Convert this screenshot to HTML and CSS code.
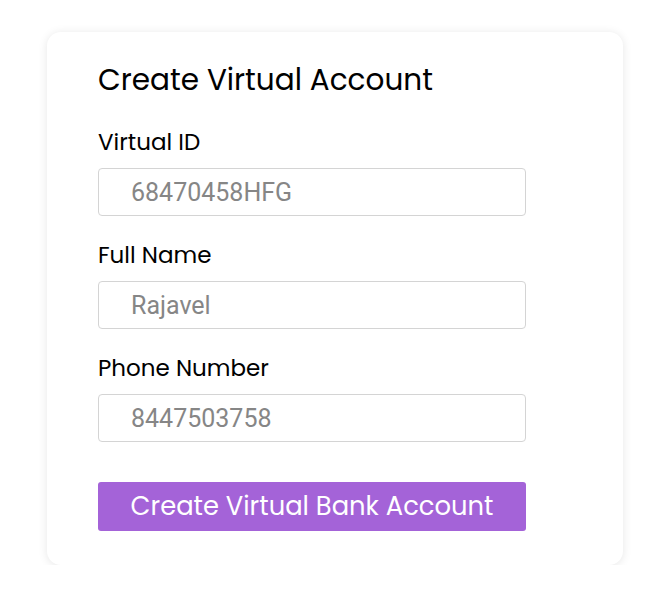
FILE: index.html
```html
<!DOCTYPE html>
<html lang="en">
<head>
    <meta charset="UTF-8">
    <meta name="viewport" content="width=device-width, initial-scale=1.0">
    <title>Create Virtual Account</title>
    <link rel="stylesheet" href="styles.css">
</head>
<body>
    <div class="card">
        <h2>Create Virtual Account</h2>
        <div class="field">
            <label for="virtual-id">Virtual ID</label>
            <input type="text" id="virtual-id" placeholder="68470458HFG">
        </div>
        <div class="field">
            <label for="full-name">Full Name</label>
            <input type="text" id="full-name" placeholder="Rajavel">
        </div>
        <div class="field">
            <label for="phone">Phone Number</label>
            <input type="text" id="phone" placeholder="8447503758">
        </div>
        <button>Create Virtual Bank Account</button>
    </div>
</body>
</html>
```

FILE: styles.css
```css
body {
    font-family: "Poppins", "Open Sans", sans-serif;
    background: #fff;
    margin: 0;
    padding: 32px 0 0 47px;
}
.card {
    width: 525px;
    background: white;
    padding: 30px 0 34px 51px;
    border-radius: 14px;
    box-shadow: 0 1px 10px rgba(0, 0, 0, 0.1);
}
h2 {
    margin: 0 0 29px;
    font-size: 29.5px;
    font-weight: 400;
    line-height: 36px;
    color: #000;
}
.field {
    width: 428px;
    margin-bottom: 24px;
}
label {
    display: block;
    font-size: 23px;
    line-height: 30px;
    color: #000;
    margin-bottom: 11px;
}
input {
    display: block;
    box-sizing: border-box;
    width: 100%;
    height: 48px;
    padding: 0 0 0 32px;
    border: 1px solid #d4d4d4;
    border-radius: 4px;
    font-family: Roboto, sans-serif;
    font-size: 25px;
    outline: none;
}
input::placeholder {
    color: #868686;
}
button {
    display: block;
    width: 428px;
    height: 49px;
    margin-top: 40px;
    background: #a463d8;
    border: none;
    border-radius: 3px;
    color: white;
    font-family: "Poppins", "Open Sans", sans-serif;
    font-size: 25.8px;
    cursor: pointer;
}
```
